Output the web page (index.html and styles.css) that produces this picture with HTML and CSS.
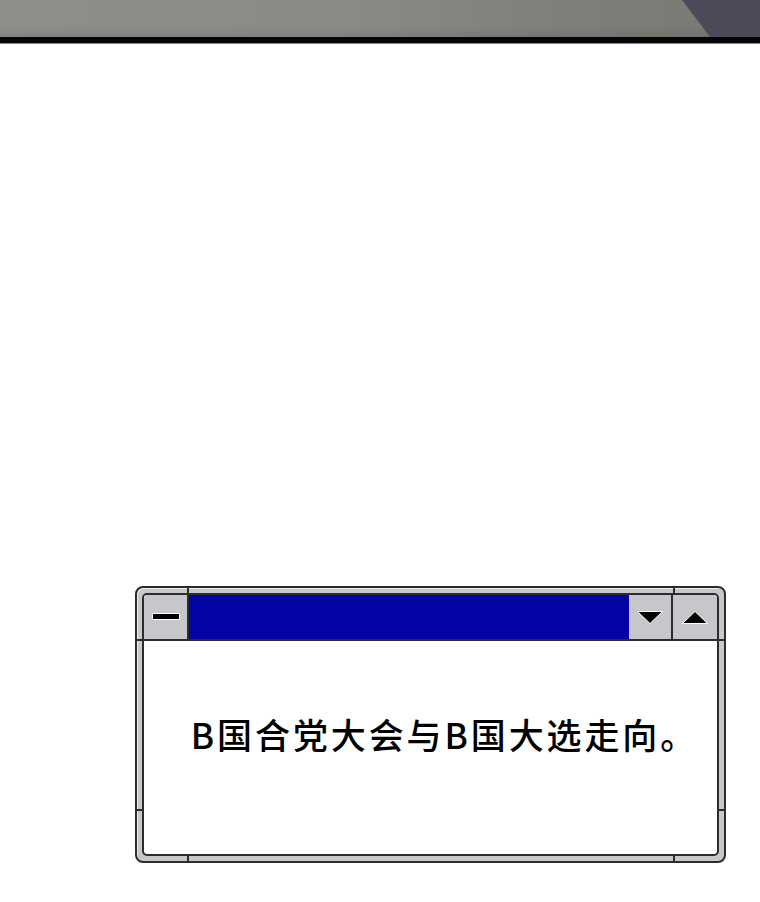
FILE: index.html
```html
<!DOCTYPE html>
<html lang="zh-CN">
<head>
<meta charset="utf-8">
<title>B国合党大会</title>
<link rel="stylesheet" href="styles.css">
</head>
<body>
  <header class="band">
    <div class="band-shade"></div>
  </header>
  <div class="band-rule"></div>

  <main class="stage">
    <section class="win">
      <span class="notch notch-v notch-tl"></span>
      <span class="notch notch-v notch-tr"></span>
      <span class="notch notch-v notch-bl"></span>
      <span class="notch notch-v notch-br"></span>
      <span class="notch notch-h notch-lt"></span>
      <span class="notch notch-h notch-lb"></span>
      <span class="notch notch-h notch-rt"></span>
      <span class="notch notch-h notch-rb"></span>

      <div class="win-inner">
        <div class="titlebar">
          <div class="btn btn-menu"><span class="dash"></span></div>
          <div class="caption"></div>
          <div class="btn btn-min">
            <svg width="28" height="15" viewBox="0 0 28 15"><polygon points="1.5,1.5 26.5,1.5 14,13.5" fill="#000" stroke="#fff" stroke-width="1"/></svg>
          </div>
          <div class="btn btn-max">
            <svg width="28" height="15" viewBox="0 0 28 15"><polygon points="1.5,13.5 26.5,13.5 14,1.5" fill="#000" stroke="#fff" stroke-width="1"/></svg>
          </div>
        </div>
        <div class="content">
          <p class="msg">B国合党大会与B国大选走向。</p>
        </div>
      </div>
    </section>
  </main>
</body>
</html>
```

FILE: styles.css
```css
html, body {
  margin: 0;
  padding: 0;
  background: #ffffff;
}

body {
  width: 760px;
  height: 902px;
  overflow: hidden;
  font-family: "Noto Sans CJK SC", "Noto Sans", sans-serif;
}

/* grey strip along the top edge */
.band {
  height: 37px;
  display: flex;
  justify-content: flex-end;
  background:
    linear-gradient(to bottom, rgba(0,0,0,0) 70%, rgba(0,0,0,0.08) 100%),
    linear-gradient(to right, #8e8e8a 0%, #8b8a86 45%, #7f7e79 75%, #797873 100%);
}

.band-shade {
  width: 78px;
  height: 100%;
  background: #4b4a59;
  clip-path: polygon(0 0, 100% 0, 100% 100%, 28px 100%);
}

.band-rule {
  height: 6px;
  background: #050505;
  border-bottom: 1px solid #8a8a8a;
}

.stage {
  padding: 542px 0 0 135px;
}

/* window frame */
.win {
  position: relative;
  border: 2px solid #2c2c2c;
  border-radius: 8px;
  background: #c8c8ca;
  box-shadow: inset 1px 1px 0 #ececee;
  padding: 5px;
  box-sizing: border-box;
  width: 591px;
  height: 277px;
}

.notch {
  position: absolute;
  background: #2c2c2c;
}

.notch-v { width: 2px; height: 7px; }
.notch-h { width: 7px; height: 2px; }

.notch-tl { left: 50px; top: -1px; }
.notch-tr { left: 536px; top: -1px; }
.notch-bl { left: 50px; bottom: -1px; }
.notch-br { left: 536px; bottom: -1px; }

.notch-lt { left: -1px; top: 51px; }
.notch-lb { left: -1px; top: 221px; }
.notch-rt { right: -1px; top: 51px; }
.notch-rb { right: -1px; top: 221px; }

.win-inner {
  height: 100%;
  border: 2px solid #2c2c2c;
  border-radius: 5px;
  overflow: hidden;
  box-sizing: border-box;
  display: flex;
  flex-direction: column;
  background: #ffffff;
}

.titlebar {
  height: 44px;
  flex: none;
  display: flex;
  border-bottom: 2px solid #2c2c2c;
}

.btn {
  width: 43px;
  flex: none;
  background: #c7c7cb;
  display: flex;
  align-items: center;
  justify-content: center;
}

.btn-menu { border-right: 2px solid #2c2c2c; }
.btn-min { border-right: 2px solid #2c2c2c; width: 42px; }
.btn-max { width: 44px; }

.dash {
  width: 26px;
  height: 5px;
  background: #000;
  box-shadow: 0 0 0 1px #ffffff;
  margin-top: -2px;
}

.caption {
  flex: 1;
  background: #0303a6;
}

.content {
  flex: 1;
  display: flex;
  align-items: center;
  justify-content: center;
  padding-bottom: 28px;
}

.msg {
  margin: 0;
  font-size: 35px;
  font-weight: 500;
  letter-spacing: 2.9px;
  color: #000;
  line-height: 1;
  padding-left: 28px;
}
```
